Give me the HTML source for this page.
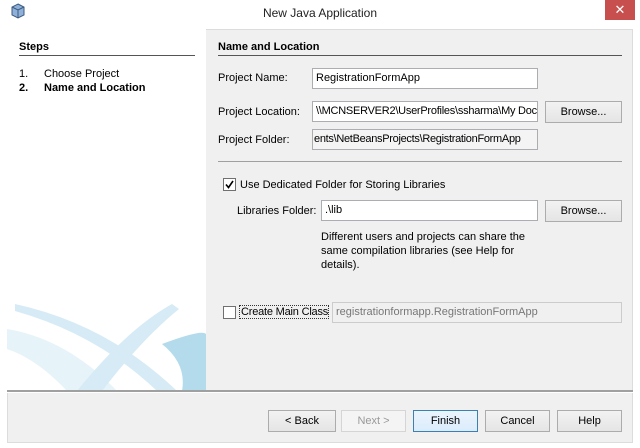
<!DOCTYPE html>
<html><head><style>
body{margin:0;width:640px;height:448px;background:#fff;position:relative;overflow:hidden;font-family:"Liberation Sans",sans-serif;font-size:11px;color:#000}
.a{position:absolute}
.t{position:absolute;white-space:nowrap;font-family:"Liberation Sans",sans-serif;font-size:11px}
.in{position:absolute;background:#fff;border:1px solid #abadb3;box-sizing:border-box;height:21px;line-height:19px;padding-left:3px;overflow:hidden;white-space:nowrap;font-family:"Liberation Sans",sans-serif;font-size:11px}
.btn{position:absolute;box-sizing:border-box;border:1px solid #acacac;background:linear-gradient(#f2f2f2,#e5e5e5);text-align:center;height:22px;line-height:20px;font-family:"Liberation Sans",sans-serif;font-size:11px}
.cb{position:absolute;width:13px;height:13px;box-sizing:border-box;border:1px solid #707070;background:#fff}
</style></head><body>
<svg class="a" style="left:10px;top:3px" width="16" height="17" viewBox="0 0 16 17"><path d="M8 1L14 4V12L8 15L2 12V4Z" fill="#8fb0d8" stroke="#3d5a80"/><path d="M2 4L8 7L14 4M8 7V15" fill="none" stroke="#3d5a80"/></svg>
<div class="t" style="left:0;width:640px;top:6px;text-align:center;font-size:12px;color:#222">New Java Application</div>
<div class="a" style="left:605px;top:0;width:30px;height:20px;background:#c7504f;color:#fff;text-align:center;line-height:19px;font-size:13px">✕</div>
<div class="a" style="left:7px;top:29px;width:626px;height:414px;background:#f0f0f0;border:1px solid #dcdcdc;box-sizing:border-box"></div>
<div class="a" style="left:7px;top:29px;width:199px;height:362px;background:#fff;overflow:hidden">
<svg width="199" height="362"><g fill="#d6ebf5">
<path d="M8 275 Q100 295 170 362 L150 362 Q90 305 8 282Z"/>
<path d="M165 275 Q120 300 70 362 L95 362 Q135 310 172 280Z"/>
<path d="M0 300 Q60 310 110 362 L60 362 Q30 330 0 320Z" opacity=".6"/>
<path d="M155 315 Q195 300 199 305 L199 362 L175 362 Q180 335 155 315Z" fill="#b4dbec"/>
</g></svg></div>
<div class="a" style="left:7px;top:390px;width:626px;height:2px;background:#a0a0a0;border-bottom:1px solid #fff"></div>
<div class="t" style="left:19px;top:41px;font-weight:bold">Steps</div>
<div class="a" style="left:19px;top:55px;width:176px;height:1px;background:#555"></div>
<div class="t" style="left:19px;top:68px">1.</div><div class="t" style="left:44px;top:68px">Choose Project</div>
<div class="t" style="left:19px;top:82px;font-weight:bold">2.</div><div class="t" style="left:44px;top:82px;font-weight:bold">Name and Location</div>
<div class="t" style="left:218px;top:41px;font-weight:bold">Name and Location</div>
<div class="a" style="left:218px;top:55px;width:404px;height:1px;background:#555"></div>
<div class="t" style="left:218px;top:72px">Project Name:</div>
<div class="in" style="left:312px;top:68px;width:226px">RegistrationFormApp</div>
<div class="t" style="left:218px;top:106px">Project Location:</div>
<div class="in" style="left:312px;top:101px;width:226px;letter-spacing:-0.25px">\\MCNSERVER2\UserProfiles\ssharma\My Doc</div>
<div class="btn" style="left:545px;top:101px;width:77px">Browse...</div>
<div class="t" style="left:218px;top:134px">Project Folder:</div>
<div class="in" style="left:312px;top:129px;width:226px;background:#f4f4f4;letter-spacing:-0.3px;padding-left:1px">ents\NetBeansProjects\RegistrationFormApp</div>
<div class="a" style="left:218px;top:161px;width:404px;height:1px;background:#a0a0a0"></div>
<div class="cb" style="left:223px;top:178px"></div>
<svg class="a" style="left:223px;top:178px" width="13" height="13"><path d="M3 6.5L5.5 9.5L10 3" fill="none" stroke="#000" stroke-width="1.6"/></svg>
<div class="t" style="left:240px;top:179px">Use Dedicated Folder for Storing Libraries</div>
<div class="t" style="left:237px;top:205px">Libraries Folder:</div>
<div class="in" style="left:321px;top:200px;width:217px">.\lib</div>
<div class="btn" style="left:545px;top:200px;width:77px">Browse...</div>
<div class="t" style="left:321px;top:230px;line-height:14px">Different users and projects can share the<br>same compilation libraries (see Help for<br>details).</div>
<div class="cb" style="left:223px;top:306px"></div>
<div class="t" style="left:239px;top:305px;border:1px dotted #333;padding:0 0 0 1px;letter-spacing:-0.2px">Create Main Class</div>
<div class="in" style="left:332px;top:302px;width:290px;background:#f0f0f0;border-color:#ccc;color:#777">registrationformapp.RegistrationFormApp</div>
<div class="btn" style="left:268px;top:410px;width:68px">&lt; Back</div>
<div class="btn" style="left:341px;top:410px;width:65px;color:#999;border-color:#d5d5d5;background:#f4f4f4">Next &gt;</div>
<div class="btn" style="left:413px;top:410px;width:65px;border-color:#3c7fb1;background:linear-gradient(#eaf4fc,#dcecfc)">Finish</div>
<div class="btn" style="left:485px;top:410px;width:65px">Cancel</div>
<div class="btn" style="left:557px;top:410px;width:65px">Help</div>
</body></html>
